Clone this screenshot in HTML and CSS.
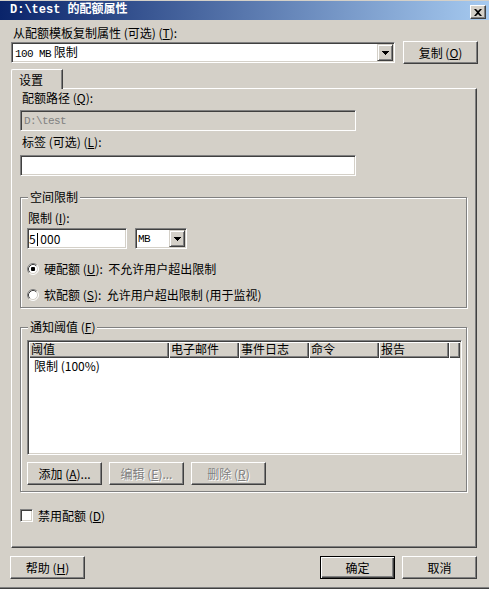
FILE: index.html
```html
<!DOCTYPE html>
<html lang="zh-CN">
<head>
    <meta charset="UTF-8">
    <title>D:\test 的配额属性</title>
    <link rel="stylesheet" href="styles.css">
</head>
<body>
    <div class="window">
        <div class="titlebar">
            <span class="title">D:\test 的配额属性</span>
            <span class="close-btn">
                <svg width="8" height="7" viewBox="0 0 8 7"><path d="M0 0h2l2 2 2-2h2L5 3.5 8 7H6L4 5 2 7H0l3-3.5z" fill="#000"/></svg>
            </span>
        </div>
        <div class="dialog">
            <div class="label top-label">从配额模板复制属性 (可选) (<u>T</u>):</div>
            <div class="template-row">
                <div class="field combo">
                    <span class="field-text"><span class="mono">100 MB</span> 限制</span>
                    <span class="drop-btn"><svg width="7" height="4" viewBox="0 0 7 4"><path d="M0 0h7v1H0zM1 1h5v1H1zM2 2h3v1H2zM3 3h1v1H3z" fill="#000"/></svg></span>
                </div>
                <button class="btn">复制 (<u>O</u>)</button>
            </div>

            <div class="tabs">
                <div class="tab">设置</div>
            </div>
            <div class="panel">
                <div class="label path-label">配额路径 (<u>Q</u>):</div>
                <div class="field text-field disabled"><span class="field-text mono">D:\test</span></div>
                <div class="label tag-label">标签 (可选) (<u>L</u>):</div>
                <div class="field text-field tag-field"></div>

                <fieldset class="group limit-group">
                    <legend>空间限制</legend>
                    <div class="label">限制 (<u>I</u>):</div>
                    <div class="limit-row">
                        <div class="field number-field"><span class="field-text">5<span class="caret"></span>&nbsp;000</span></div>
                        <div class="field unit-combo">
                            <span class="field-text mono">MB</span>
                            <span class="drop-btn"><svg width="7" height="4" viewBox="0 0 7 4"><path d="M0 0h7v1H0zM1 1h5v1H1zM2 2h3v1H2zM3 3h1v1H3z" fill="#000"/></svg></span>
                        </div>
                    </div>
                    <div class="radio-row first">
                        <svg class="radio" width="12" height="12" viewBox="0 0 12 12">
                            <circle cx="6" cy="6" r="5" fill="#fff"/>
                            <path d="M2.11 9.89A5.5 5.5 0 0 1 9.89 2.11" fill="none" stroke="#808080"/>
                            <path d="M9.89 2.11A5.5 5.5 0 0 1 2.11 9.89" fill="none" stroke="#fff"/>
                            <path d="M2.82 9.18A4.5 4.5 0 0 1 9.18 2.82" fill="none" stroke="#404040"/>
                            <path d="M9.18 2.82A4.5 4.5 0 0 1 2.82 9.18" fill="none" stroke="#d4d0c8"/>
                            <rect x="4" y="4" width="4" height="4" rx="1" fill="#000"/>
                        </svg>
                        <span>硬配额 (<u>U</u>):&nbsp; 不允许用户超出限制</span>
                    </div>
                    <div class="radio-row">
                        <svg class="radio" width="12" height="12" viewBox="0 0 12 12">
                            <circle cx="6" cy="6" r="5" fill="#fff"/>
                            <path d="M2.11 9.89A5.5 5.5 0 0 1 9.89 2.11" fill="none" stroke="#808080"/>
                            <path d="M9.89 2.11A5.5 5.5 0 0 1 2.11 9.89" fill="none" stroke="#fff"/>
                            <path d="M2.82 9.18A4.5 4.5 0 0 1 9.18 2.82" fill="none" stroke="#404040"/>
                            <path d="M9.18 2.82A4.5 4.5 0 0 1 2.82 9.18" fill="none" stroke="#d4d0c8"/>
                        </svg>
                        <span>软配额 (<u>S</u>):&nbsp; 允许用户超出限制 (用于监视)</span>
                    </div>
                </fieldset>

                <fieldset class="group notify-group">
                    <legend>通知阈值 (<u>F</u>)</legend>
                    <div class="listview">
                        <div class="lv-header">
                            <span class="col c-wide">阈值</span>
                            <span class="col">电子邮件</span>
                            <span class="col">事件日志</span>
                            <span class="col">命令</span>
                            <span class="col">报告</span>
                            <span class="col filler"></span>
                        </div>
                        <div class="lv-row">限制 (100%)</div>
                    </div>
                    <div class="btn-row">
                        <button class="btn">添加 (<u>A</u>)...</button>
                        <button class="btn" disabled>编辑 (<u>E</u>)...</button>
                        <button class="btn" disabled>删除 (<u>R</u>)</button>
                    </div>
                </fieldset>

                <div class="check-row">
                    <span class="checkbox"></span>
                    <span>禁用配额 (<u>D</u>)</span>
                </div>
            </div>

            <div class="footer">
                <button class="btn">帮助 (<u>H</u>)</button>
                <span class="spacer"></span>
                <button class="btn default">确定</button>
                <button class="btn">取消</button>
            </div>
        </div>
    </div>
</body>
</html>
```

FILE: styles.css
```css
* {
    margin: 0;
    padding: 0;
    box-sizing: border-box;
}

body {
    background: #d4d0c8;
    color: #000;
    font: 12px/14px "Noto Sans CJK SC", sans-serif;
}

u {
    text-decoration: underline;
    text-underline-offset: 1px;
}

.mono {
    font: 11px/14px "Liberation Mono", monospace;
    letter-spacing: -0.6px;
}

.window {
    width: 489px;
    height: 589px;
    padding-top: 1px;
    border-bottom: 1px solid #404040;
    box-shadow: inset 0 -1px #808080;
}

/* title bar */
.titlebar {
    height: 19px;
    display: flex;
    justify-content: space-between;
    align-items: flex-start;
    padding: 0 3px 0 10px;
    background: linear-gradient(to right, #0a246a, #a6caf0);
    color: #fff;
}

.title {
    font: bold 12px/19px "Liberation Mono", "Noto Sans CJK SC", monospace;
}

.close-btn {
    margin-top: 4px;
    width: 16px;
    height: 14px;
    display: flex;
    align-items: center;
    justify-content: center;
    background: #d4d0c8;
    border: 1px solid;
    border-color: #fff #404040 #404040 #fff;
    box-shadow: inset -1px -1px #808080;
}

.dialog {
    padding: 0 11px;
}

.label {
    padding-left: 2px;
    height: 14px;
}

.top-label {
    margin-top: 6px;
}

/* controls */
.btn {
    width: 75px;
    height: 23px;
    font: inherit;
    color: #000;
    background: #d4d0c8;
    border: 1px solid;
    border-color: #fff #404040 #404040 #fff;
    box-shadow: inset -1px -1px #808080;
}

.btn:disabled {
    color: #808080;
    text-shadow: 1px 1px #fff;
}

.btn.default {
    border: 1px solid #000;
    box-shadow: inset 1px 1px #fff, inset -1px -1px #404040, inset -2px -2px #808080;
}

.field {
    height: 21px;
    display: flex;
    align-items: center;
    padding: 1px;
    background: #fff;
    border: 1px solid;
    border-color: #808080 #fff #fff #808080;
    box-shadow: inset 1px 1px #404040, inset -1px -1px #d4d0c8;
}

.field-text {
    padding-left: 2px;
    white-space: nowrap;
}

.field.disabled {
    background: #d4d0c8;
    color: #808080;
}

.drop-btn {
    margin-left: auto;
    width: 16px;
    height: 17px;
    display: flex;
    align-items: center;
    justify-content: center;
    background: #d4d0c8;
    border: 1px solid;
    border-color: #d4d0c8 #404040 #404040 #d4d0c8;
    box-shadow: inset 1px 1px #fff, inset -1px -1px #808080;
}

.template-row {
    display: flex;
    align-items: center;
    gap: 8px;
    margin-top: 1px;
}

.combo {
    flex: 1;
}

/* tab */
.tabs {
    display: flex;
    margin-top: 5px;
}

.tab {
    position: relative;
    z-index: 1;
    width: 52px;
    height: 20px;
    margin-bottom: -1px;
    padding: 3px 0 0 7px;
    background: #d4d0c8;
    border-top: 1px solid #fff;
    border-left: 1px solid #fff;
    border-right: 1px solid #404040;
    border-top-left-radius: 2px;
    box-shadow: inset -1px 0 #808080;
}

.panel {
    width: 466px;
    height: 460px;
    padding: 0 8px;
    border: 1px solid;
    border-color: #fff #404040 #404040 #fff;
    box-shadow: inset -1px -1px #808080;
}

.path-label {
    margin-top: 2px;
}

.text-field {
    width: 336px;
    margin-top: 5px;
}

.tag-label {
    margin-top: 4px;
}

.tag-field {
    margin-top: 6px;
}

/* group boxes */
.group {
    width: 447px;
    min-width: 0;
    border: 1px solid #808080;
    box-shadow: inset 1px 1px #fff, 1px 1px #fff;
    padding: 0 4px 5px 6px;
}

.group legend {
    margin-left: 1px;
    padding: 0 2px;
    background: #d4d0c8;
    line-height: 14px;
}

.limit-group {
    margin-top: 14px;
    padding-top: 7px;
}

.limit-group .label {
    padding-left: 1px;
}

.limit-row {
    display: flex;
    gap: 8px;
    margin-top: 3px;
}

.number-field {
    width: 100px;
}

.number-field .field-text {
    padding-left: 0;
}

.caret {
    display: inline-block;
    width: 1px;
    height: 13px;
    margin-left: 1px;
    vertical-align: -2px;
    background: #000;
}

.unit-combo {
    width: 52px;
}

.unit-combo .field-text {
    padding-left: 1px;
}

.radio-row {
    display: flex;
    align-items: center;
    gap: 5px;
    height: 14px;
    margin-top: 12px;
}

.radio-row.first {
    margin-top: 13px;
}

.notify-group {
    margin-top: 12px;
    padding-top: 6px;
    padding-bottom: 6px;
}

/* list view */
.listview {
    height: 115px;
    padding: 1px;
    background: #fff;
    border: 1px solid;
    border-color: #808080 #fff #fff #808080;
    box-shadow: inset 1px 1px #404040, inset -1px -1px #d4d0c8;
}

.lv-header {
    display: flex;
    height: 16px;
}

.col {
    width: 70px;
    height: 16px;
    padding-left: 2px;
    background: #d4d0c8;
    box-shadow: inset 1px 1px #fff, inset -1px -1px #404040, inset -2px -2px #808080;
    white-space: nowrap;
}

.col.c-wide {
    width: 140px;
}

.col.filler {
    flex: 1;
    width: auto;
}

.lv-row {
    padding: 1px 0 0 5px;
    height: 15px;
}

.btn-row {
    display: flex;
    gap: 7px;
    margin-top: 7px;
}

/* checkbox */
.check-row {
    display: flex;
    align-items: center;
    gap: 5px;
    margin-top: 17px;
    height: 13px;
}

.checkbox {
    width: 13px;
    height: 13px;
    background: #fff;
    border: 1px solid;
    border-color: #808080 #fff #fff #808080;
    box-shadow: inset 1px 1px #404040, inset -1px -1px #d4d0c8;
}

/* footer */
.footer {
    display: flex;
    gap: 7px;
    margin: 8px 1px 0 -1px;
}

.spacer {
    flex: 1;
}
```
